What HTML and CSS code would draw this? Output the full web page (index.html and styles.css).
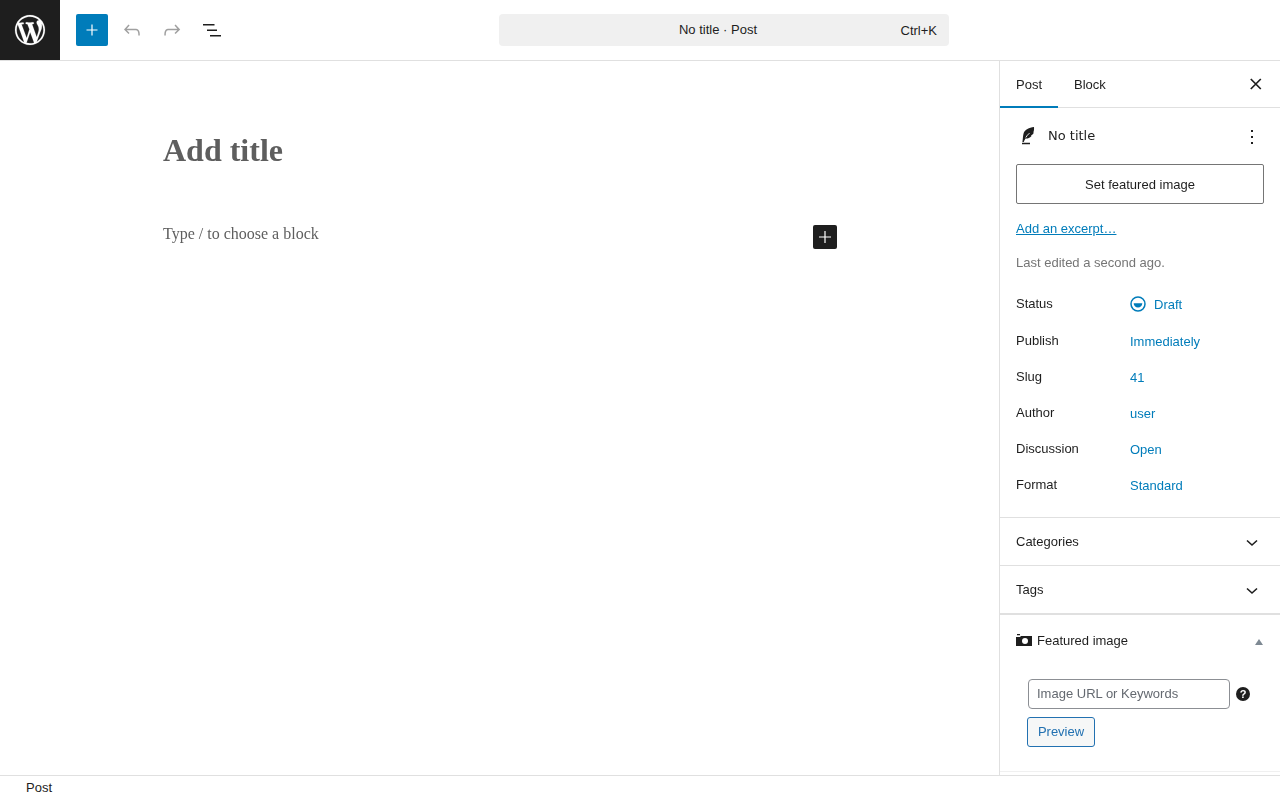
FILE: index.html
```html
<!DOCTYPE html>
<html lang="en">
<head>
<meta charset="utf-8">
<title>Add New Post</title>
<link rel="stylesheet" href="styles.css">
</head>
<body>
<div class="app">
  <header class="topbar">
    <a class="wp-logo"><svg width="36" height="36" viewBox="-2 -2 24 24" fill="#fff" stroke="#fff" stroke-width=".1"><path d="M20 10c0-5.51-4.49-10-10-10C4.48 0 0 4.49 0 10c0 5.52 4.48 10 10 10 5.51 0 10-4.48 10-10zM7.78 15.37L4.37 6.22c.55-.02 1.17-.08 1.17-.08.5-.06.44-1.13-.06-1.11 0 0-1.45.11-2.37.11-.18 0-.37 0-.58-.01C4.12 2.69 6.87 1.11 10 1.11c2.33 0 4.45.87 6.05 2.34-.68-.11-1.65.39-1.65 1.58 0 .74.45 1.36.9 2.1.35.61.55 1.36.55 2.46 0 1.49-1.4 5-1.4 5l-3.03-8.37c.54-.02.82-.17.82-.17.5-.05.44-1.25-.06-1.22 0 0-1.44.12-2.38.12-.87 0-2.33-.12-2.33-.12-.5-.03-.56 1.2-.06 1.22l.92.08 1.26 3.41zM17.41 10c.24-.64.74-1.87.43-4.25.7 1.29 1.05 2.71 1.05 4.25 0 3.29-1.73 6.24-4.4 7.78.97-2.59 1.94-5.2 2.92-7.78zM6.1 18.09C3.12 16.65 1.11 13.53 1.11 10c0-1.3.23-2.48.72-3.59C3.25 10.3 4.67 14.2 6.1 18.09zm4.03-6.63l2.58 6.98c-.86.29-1.76.45-2.71.45-.79 0-1.57-.11-2.29-.33.81-2.38 1.62-4.74 2.42-7.1z"/></svg></a>
    <div class="tools">
      <button class="add-btn"><svg width="24" height="24" viewBox="0 0 24 24" fill="#fff"><path d="M17.500 11.400h-4.900V6.500h-1.200v4.900H6.500v1.200h4.900v4.900h1.200v-4.900h4.900z"/></svg></button>
      <button class="icon-btn"><svg width="24" height="24" viewBox="0 0 24 24" fill="#a0a0a0"><path d="M18.300 11.700c-.6-.6-1.400-.9-2.300-.9H6.700l2.900-3.300-1.100-1-4.500 5L8.500 16l1-1-2.700-2.700H16c.5 0 .9.2 1.300.5 1 1 1 3.400 1 4.500v.3h1.500v-.2c0-1.500 0-4.300-1.500-5.700z"/></svg></button>
      <button class="icon-btn"><svg width="24" height="24" viewBox="0 0 24 24" fill="#a0a0a0"><path d="M15.600 6.500l-1.100 1 2.900 3.300H8c-.9 0-1.700.3-2.300.9-1.400 1.500-1.400 4.200-1.400 5.600v.2h1.500v-.3c0-1.100 0-3.500 1-4.500.3-.3.7-.5 1.300-.5h9.200L14.500 15l1.100 1.100 4.600-4.600-4.600-5z"/></svg></button>
      <button class="icon-btn"><svg width="24" height="24" viewBox="0 0 24 24" fill="#1e1e1e"><path d="M3 6h11.500v1.500H3zM7 11.500h10v1.500H7zM10 17h11v1.500H10z"/></svg></button>
    </div>
    <div class="command">
      <div class="command-bar">
        <span class="command-title">No title · Post</span>
        <span class="command-key">Ctrl+K</span>
      </div>
    </div>
  </header>

  <div class="main">
    <main class="editor">
      <h1 class="post-title">Add title</h1>
      <div class="block-row">
        <p class="placeholder">Type / to choose a block</p>
        <button class="inline-add"><svg width="24" height="24" viewBox="0 0 24 24" fill="#fff"><path d="M18 11.400h-5.400V6h-1.200v5.400H6v1.200h5.400V18h1.200v-5.400H18z"/></svg></button>
      </div>
    </main>

    <aside class="sidebar">
      <div class="tabs">
        <button class="tab tab-active">Post</button>
        <button class="tab">Block</button>
        <button class="close"><svg width="24" height="24" viewBox="0 0 24 24" stroke="#1e1e1e" stroke-width="1.700" fill="none"><path d="M6.800 7l10 10M16.800 7l-10 10"/></svg></button>
      </div>

      <section class="summary">
        <div class="summary-head">
          <svg class="post-icon" width="24" height="24" viewBox="0 0 24 24"><path fill="#1e1e1e" d="M6 18.700h8v1.600H6zM18 3c-5 .5-9 2.500-10.300 6-.8 2.500-.7 5.200-1.200 8.200l-.1.800h1.400c.4-1.300.9-2.500 1.700-3.500 2.400.1 4.300-.6 5.800-2.300.3-.4.1-.7-.4-.8 1.200-.4 2.200-1.200 2.800-2.300.2-.4 0-.6-.4-.7.7-1.500.9-3.100.7-5.400z"/><path stroke="#fff" stroke-width=".9" fill="none" d="M9.800 13.500c.9-1.600 2.100-3 3.700-4.400"/></svg>
          <span class="summary-title">No title</span>
          <span class="more"><i></i><i></i><i></i></span>
        </div>
        <button class="featured-btn">Set featured image</button>
        <a class="excerpt">Add an excerpt…</a>
        <p class="edited">Last edited a second ago.</p>
        <dl class="meta">
          <div class="meta-row status-row"><dt>Status</dt><dd><svg class="draft-icon" width="16" height="16" viewBox="0 0 16 16"><circle cx="8" cy="8" r="7" fill="none" stroke="#007cba" stroke-width="1.500"/><path d="M3.700 7.300h8.600c0 2.500-1.900 4.200-4.300 4.200s-4.300-1.700-4.300-4.200z" fill="#007cba"/></svg>Draft</dd></div>
          <div class="meta-row"><dt>Publish</dt><dd>Immediately</dd></div>
          <div class="meta-row"><dt>Slug</dt><dd>41</dd></div>
          <div class="meta-row"><dt>Author</dt><dd>user</dd></div>
          <div class="meta-row"><dt>Discussion</dt><dd>Open</dd></div>
          <div class="meta-row"><dt>Format</dt><dd>Standard</dd></div>
        </dl>
      </section>

      <section class="panel-row"><span>Categories</span><svg width="24" height="24" viewBox="0 0 24 24" fill="none" stroke="#1e1e1e" stroke-width="1.600"><path d="M7 11.500l5 4.500 5-4.500"/></svg></section>
      <section class="panel-row panel-thick"><span>Tags</span><svg width="24" height="24" viewBox="0 0 24 24" fill="none" stroke="#1e1e1e" stroke-width="1.600"><path d="M7 11.500l5 4.500 5-4.500"/></svg></section>

      <section class="featured">
        <div class="featured-head">
          <svg width="16" height="16" viewBox="0 0 16 16"><path fill="#1e1e1e" d="M1 2h3v1.200H1zM0 5h4l1-1h11v10H0z"/><circle cx="9" cy="9" r="3" fill="#fff"/></svg>
          <span>Featured image</span>
          <i class="caret"></i>
        </div>
        <div class="url-row">
          <input class="url-input" type="text" placeholder="Image URL or Keywords">
          <svg class="help" width="16" height="16" viewBox="0 0 16 16"><circle cx="8" cy="8" r="7" fill="#1e1e1e"/><text x="8" y="12" text-anchor="middle" class="help-mark">?</text></svg>
        </div>
        <button class="preview-btn">Preview</button>
      </section>
    </aside>
  </div>

  <footer class="statusbar">Post</footer>
</div>
</body>
</html>
```
FILE: styles.css
```css
* { box-sizing: border-box; }
html, body { margin: 0; height: 100%; overflow: hidden; }
body { font-family: "Liberation Sans", Arial, sans-serif; font-size: 13px; color: #1e1e1e; background: #fff; }
button { font: inherit; color: inherit; border: 0; background: none; padding: 0; }
.app { display: flex; flex-direction: column; height: 800px; will-change: opacity; }

.topbar { flex: 0 0 61px; display: flex; align-items: flex-start; border-bottom: 1px solid #e0e0e0; position: relative; }
.wp-logo { width: 60px; height: 60px; background: #1e1e1e; display: flex; align-items: center; justify-content: center; }
.tools { display: flex; align-items: center; height: 60px; padding-left: 16px; }
.add-btn { width: 32px; height: 32px; background: #007cba; border-radius: 2px; display: flex; align-items: center; justify-content: center; margin-right: 4px; }
.icon-btn { width: 40px; height: 40px; display: flex; align-items: center; justify-content: center; }
.command { position: absolute; left: 499px; top: 14px; }
.command-bar { width: 450px; height: 32px; background: #f0f0f0; border-radius: 4px; position: relative; display: flex; align-items: center; justify-content: center; padding: 0 12px 2px 0; }
.command-title { font-size: 13px; }
.command-key { position: absolute; right: 12px; top: 9px; font-size: 13px; line-height: 15px; }

.main { flex: 1; display: flex; min-height: 0; }
.editor { flex: 1; min-width: 0; padding: 67px 0 0 163px; font-family: "Liberation Serif", "Times New Roman", serif; }
.post-title { margin: 0; width: 674px; font-size: 32px; line-height: 44px; font-weight: 700; color: #5e5e5e; }
.block-row { display: flex; justify-content: space-between; align-items: flex-start; width: 674px; margin-top: 50px; }
.placeholder { margin: 0; font-size: 16px; line-height: 24px; color: #5e5e5e; }
.inline-add { width: 24px; height: 24px; margin-top: 3px; background: #1e1e1e; border-radius: 2px; display: flex; align-items: center; justify-content: center; }

.sidebar { flex: 0 0 281px; border-left: 1px solid #e0e0e0; overflow: hidden; }
.tabs { height: 47px; display: flex; border-bottom: 1px solid #e0e0e0; position: relative; }
.tab { padding: 0 16px; height: 47px; font-size: 13px; }
.tab-active { box-shadow: inset 0 -2px 0 #007cba; height: 47px; }
.close { margin-left: auto; width: 48px; display: flex; align-items: center; justify-content: center; }
.summary { padding: 16px 16px 0; height: 410px; border-bottom: 1px solid #e0e0e0; }
.summary-head { display: flex; align-items: center; height: 24px; }
.post-icon { margin-right: 8px; }
.summary-title { font-family: "DejaVu Sans", sans-serif; font-size: 13px; margin-bottom: 2px; }
.more { margin: 2px 0 0 auto; width: 24px; display: flex; flex-direction: column; align-items: center; gap: 4px; }
.more i { width: 2px; height: 2px; background: #1e1e1e; display: block; }
.featured-btn { display: block; width: 248px; height: 40px; margin-top: 16px; border: 1px solid #757575; background: #fff; border-radius: 2px; font-size: 13px; }
.excerpt { display: block; margin-top: 16px; line-height: 18px; color: #007cba; text-decoration: underline; }
.edited { margin: 16px 0 0; line-height: 18px; color: #757575; }
.meta { margin: 23px 0 0; }
.meta-row { display: flex; height: 36px; line-height: 18px; }
.status-row { height: 37px; }
.meta-row dt { width: 114px; flex: none; }
.meta-row dd { margin: 1px 0 0; color: #007cba; display: flex; align-items: center; align-self: flex-start; height: 18px; }
.draft-icon { margin: -2px 8px 0 0; }
.panel-row { height: 48px; display: flex; align-items: center; justify-content: space-between; padding: 0 16px 1px; border-bottom: 1px solid #e0e0e0; }
.panel-thick { box-shadow: 0 1px 0 #e0e0e0; }
.featured { position: relative; height: 158px; border-bottom: 1px solid #f0f0f0; }
.featured-head { height: 52px; display: flex; align-items: center; padding: 0 17px 0 16px; gap: 5px; }
.caret { margin-left: auto; width: 0; height: 0; border-left: 4px solid transparent; border-right: 4px solid transparent; border-bottom: 6px solid #7e8993; margin-top: 3px; }
.url-row { display: flex; align-items: center; margin: 13px 0 0 28px; }
.url-input { width: 202px; height: 30px; border: 1px solid #8c8f94; border-radius: 4px; padding: 0 8px 2px; font: 13px "Liberation Sans", Arial, sans-serif; background: #fff; }
.url-input::placeholder { color: #646970; opacity: 1; }
.help { margin-left: 5px; }
.help-mark { fill: #fff; font: 700 11px "Liberation Sans", Arial, sans-serif; }
.preview-btn { display: block; margin: 8px 0 0 27px; width: 68px; height: 30px; padding-bottom: 2px; border: 1px solid #2271b1; border-radius: 3px; background: #f6f7f7; color: #2271b1; }

.statusbar { flex: 0 0 25px; border-top: 1px solid #e0e0e0; padding-left: 26px; line-height: 24px; background: #fff; z-index: 1; }
```
